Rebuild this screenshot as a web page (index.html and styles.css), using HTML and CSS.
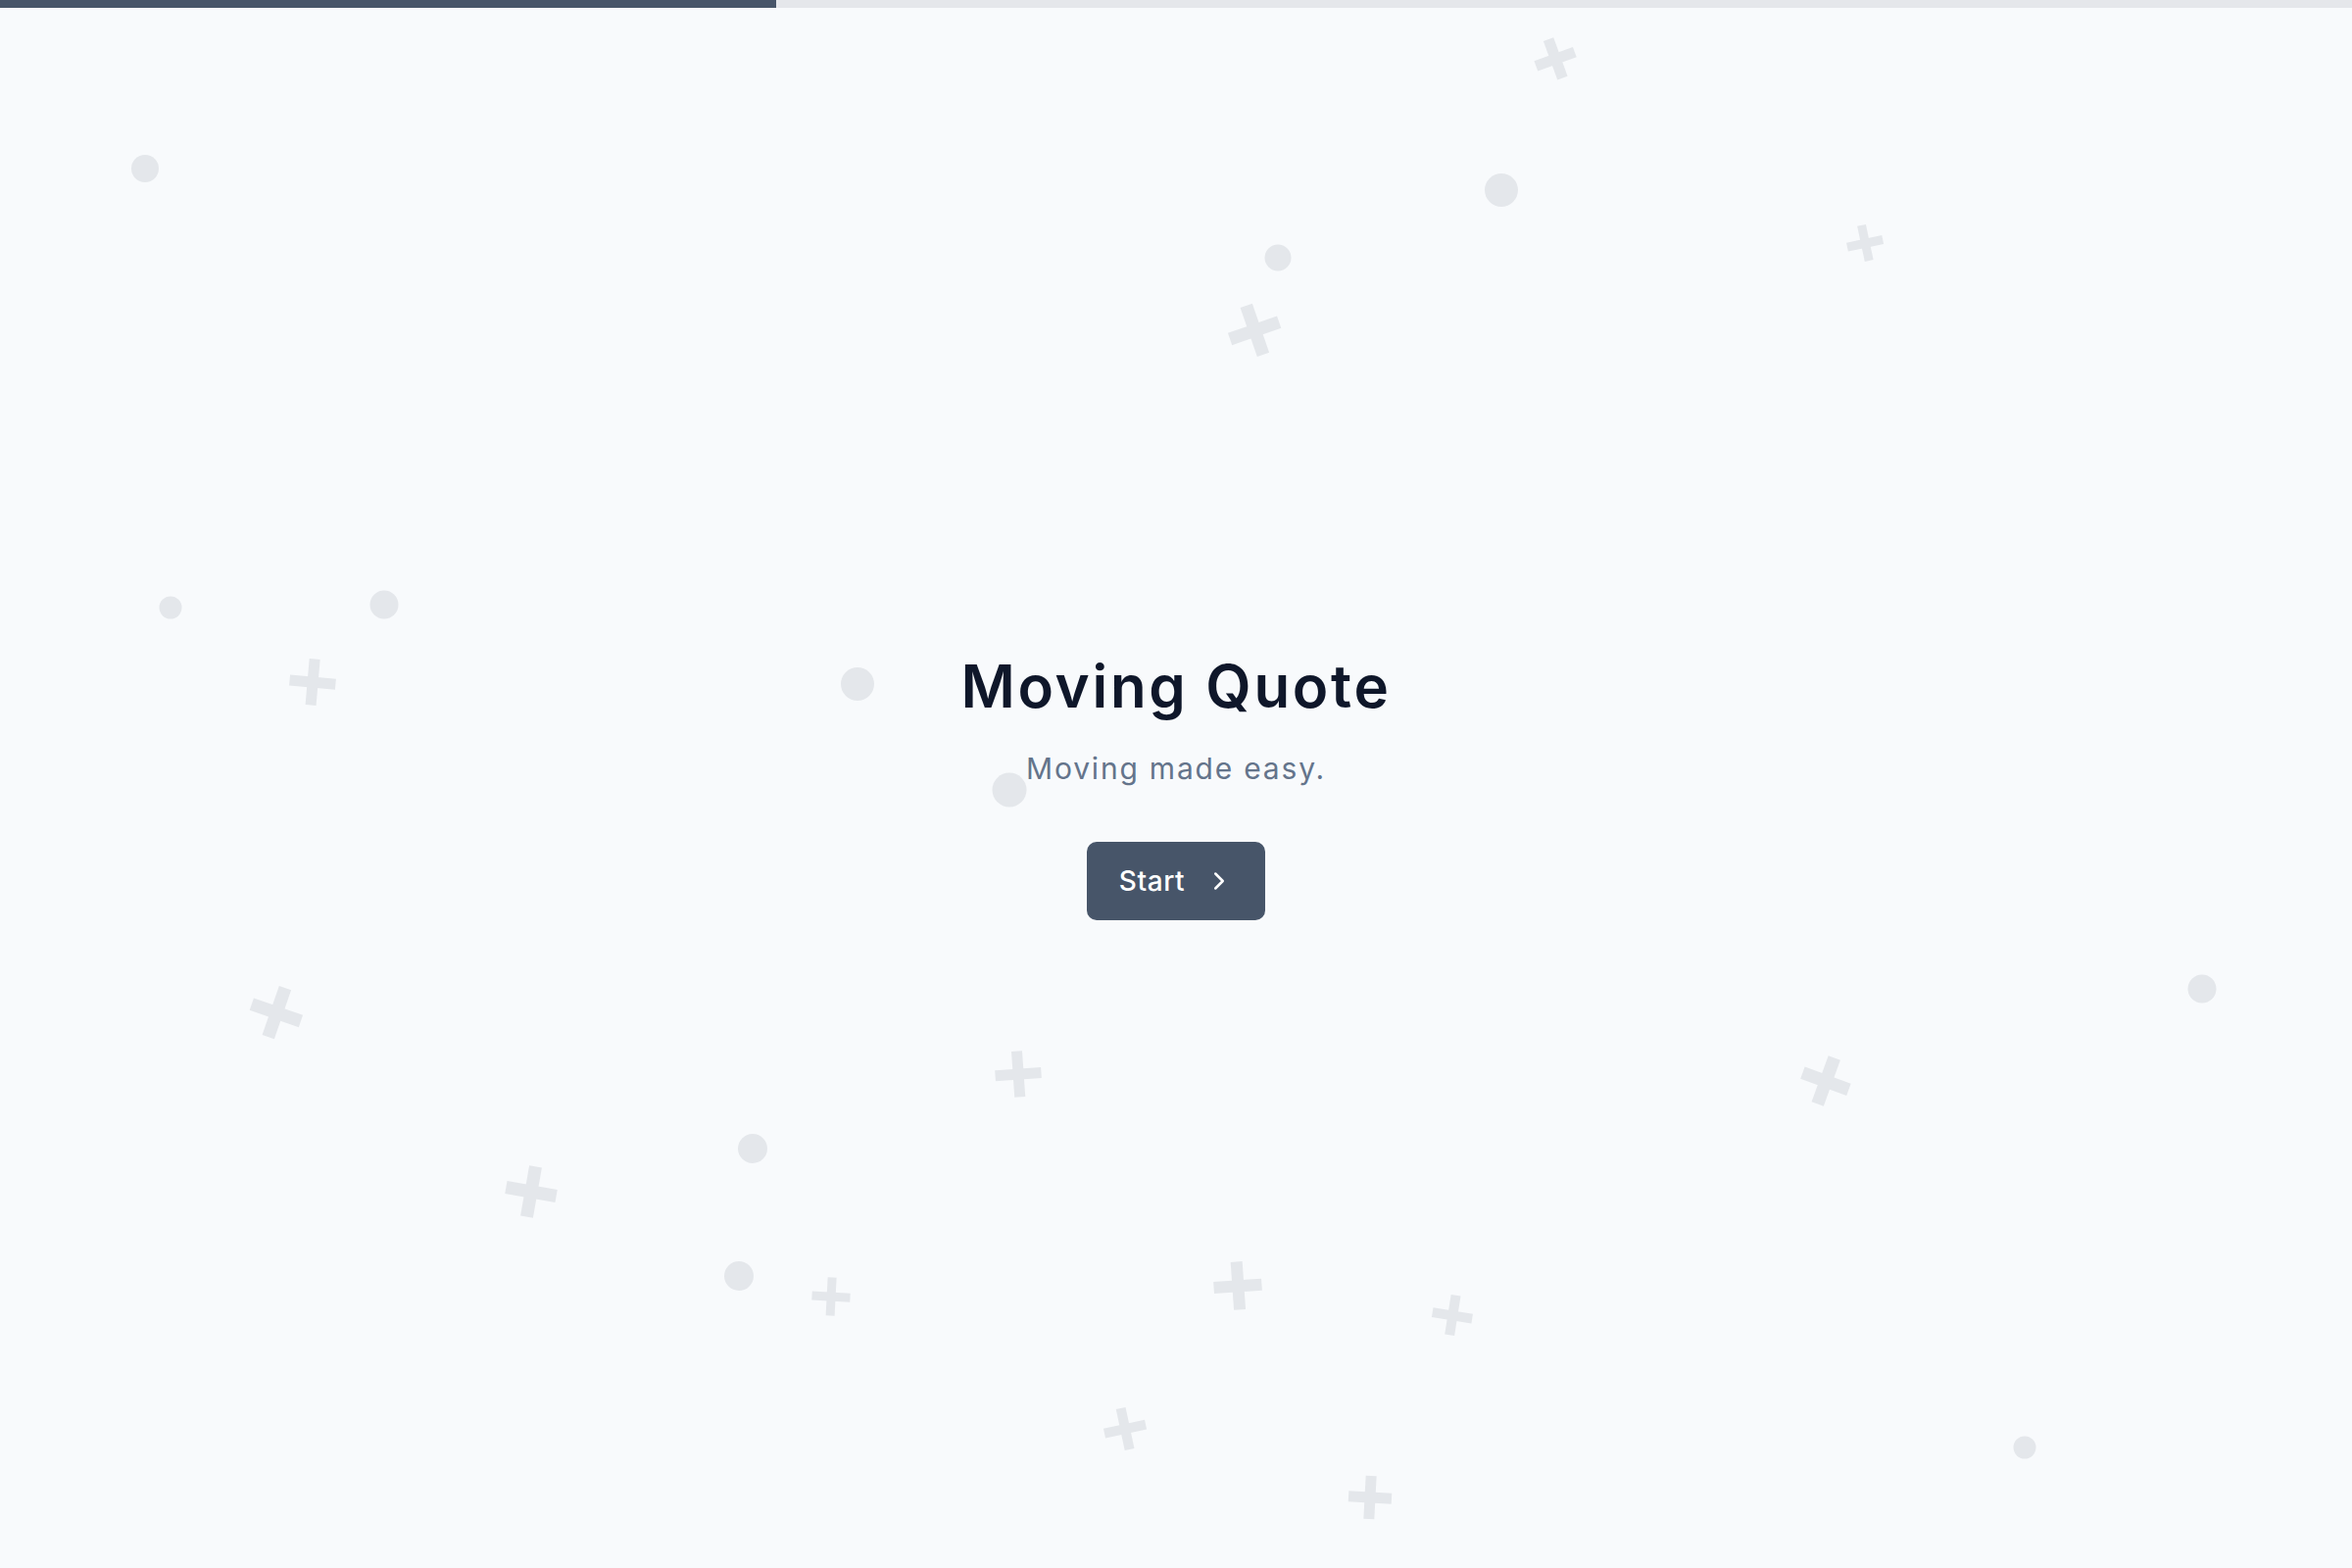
FILE: index.html
```html
<!DOCTYPE html>
<html lang="en">
<head>
<meta charset="utf-8">
<title>Moving Quote</title>
<link rel="stylesheet" href="styles.css">
</head>
<body>
  <div class="progress"><div class="progress-fill"></div></div>

  <main class="stage">
    <div class="decor" aria-hidden="true">
      <span class="dot c1"></span>
      <span class="dot c2"></span>
      <span class="dot c3"></span>
      <span class="dot c4"></span>
      <span class="dot c5"></span>
      <span class="dot c6"></span>
      <span class="dot c7"></span>
      <span class="dot c8"></span>
      <span class="dot c9"></span>
      <span class="dot c10"></span>
      <span class="dot c11"></span>

      <span class="plus p1"></span>
      <span class="plus p2"></span>
      <span class="plus p3"></span>
      <span class="plus p4"></span>
      <span class="plus p5"></span>
      <span class="plus p6"></span>
      <span class="plus p7"></span>
      <span class="plus p8"></span>
      <span class="plus p9"></span>
      <span class="plus p10"></span>
      <span class="plus p11"></span>
      <span class="plus p12"></span>
      <span class="plus p13"></span>
    </div>

    <section class="hero">
      <h1 class="hero-title">Moving Quote</h1>
      <p class="hero-subtitle">Moving made easy.</p>
      <button class="start-btn" type="button">
        <span>Start</span>
        <svg class="start-icon" viewBox="0 0 24 24" fill="none" stroke="currentColor" stroke-width="2" stroke-linecap="round" stroke-linejoin="round"><path d="m9 18 6-6-6-6"/></svg>
      </button>
    </section>
  </main>
</body>
</html>
```

FILE: styles.css
```css
* { box-sizing: border-box; }

html, body {
  margin: 0;
  height: 100%;
}

body {
  background: #f8fafc;
  font-family: Inter, "Open Sans", sans-serif;
  display: flex;
  flex-direction: column;
  overflow: hidden;
}

/* top progress indicator */
.progress {
  height: 8px;
  background: #e5e7eb;
  flex: none;
}
.progress-fill {
  width: 33%;
  height: 100%;
  background: #475569;
}

.stage {
  flex: 1;
  position: relative;
  display: flex;
  align-items: center;
  justify-content: center;
  padding-bottom: 6px;
}

/* scattered background shapes */
.decor {
  position: absolute;
  inset: -8px 0 0 0;
  pointer-events: none;
  z-index: 0;
}

.dot,
.plus {
  position: absolute;
  left: var(--x);
  top: var(--y);
  width: var(--s);
  height: var(--s);
  transform: translate(-50%, -50%) rotate(var(--r, 0deg));
}

.dot {
  border-radius: 50%;
  background: #e4e7eb;
}

.plus::before,
.plus::after {
  content: "";
  position: absolute;
  background: #e4e7eb;
}
.plus::before {
  left: 0;
  right: 0;
  top: 50%;
  height: calc(var(--s) * 0.25);
  transform: translateY(-50%);
}
.plus::after {
  top: 0;
  bottom: 0;
  left: 50%;
  width: calc(var(--s) * 0.25);
  transform: translateX(-50%);
}

.c1  { --x: 148px;  --y: 172px;  --s: 28px; }
.c2  { --x: 1532px; --y: 194px;  --s: 34px; }
.c3  { --x: 1304px; --y: 263px;  --s: 27px; }
.c4  { --x: 174px;  --y: 620px;  --s: 23px; }
.c5  { --x: 392px;  --y: 617px;  --s: 29px; }
.c6  { --x: 875px;  --y: 698px;  --s: 34px; }
.c7  { --x: 1030px; --y: 806px;  --s: 35px; }
.c8  { --x: 2247px; --y: 1009px; --s: 29px; }
.c9  { --x: 768px;  --y: 1172px; --s: 30px; }
.c10 { --x: 754px;  --y: 1302px; --s: 30px; }
.c11 { --x: 2066px; --y: 1477px; --s: 23px; }

.p1  { --x: 1587px; --y: 60px;   --s: 42px; --r: -20deg; }
.p2  { --x: 1903px; --y: 248px;  --s: 37px; --r: -12deg; }
.p3  { --x: 1280px; --y: 337px;  --s: 53px; --r: -19deg; }
.p4  { --x: 319px;  --y: 696px;  --s: 47px; --r: 5deg; }
.p5  { --x: 282px;  --y: 1033px; --s: 53px; --r: 19deg; }
.p6  { --x: 1039px; --y: 1096px; --s: 47px; --r: -4deg; }
.p7  { --x: 1863px; --y: 1103px; --s: 50px; --r: 20deg; }
.p8  { --x: 542px;  --y: 1216px; --s: 52px; --r: 10deg; }
.p9  { --x: 848px;  --y: 1323px; --s: 39px; --r: 3deg; }
.p10 { --x: 1263px; --y: 1312px; --s: 49px; --r: -4deg; }
.p11 { --x: 1482px; --y: 1342px; --s: 41px; --r: 9deg; }
.p12 { --x: 1148px; --y: 1458px; --s: 43px; --r: -12deg; }
.p13 { --x: 1398px; --y: 1528px; --s: 44px; --r: 3deg; }

/* centred intro */
.hero {
  position: relative;
  z-index: 1;
  display: flex;
  flex-direction: column;
  align-items: center;
  text-align: center;
}

.hero-title {
  margin: 0;
  font-size: 60px;
  line-height: 72px;
  font-weight: 600;
  letter-spacing: 0.045em;
  color: #0f172a;
}

.hero-subtitle {
  margin: 30px 0 0;
  font-size: 30px;
  line-height: 36px;
  font-weight: 400;
  letter-spacing: 0.06em;
  color: #64748b;
}

.start-btn {
  margin-top: 57px;
  height: 80px;
  padding: 0 32px 0 33px;
  display: flex;
  align-items: center;
  gap: 20px;
  border: 0;
  border-radius: 10px;
  background: #475569;
  color: #ffffff;
  font-family: inherit;
  font-size: 28px;
  font-weight: 500;
  letter-spacing: 0.02em;
  cursor: pointer;
}

.start-icon {
  width: 30px;
  height: 30px;
  flex: none;
}
```
